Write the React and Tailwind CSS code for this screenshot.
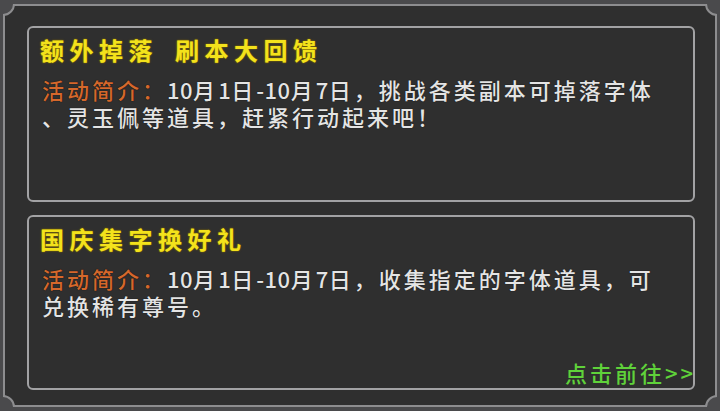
const cards = [
  {
    title: ['额外掉落', '刷本大回馈'],
    lines: ['10月1日-10月7日，挑战各类副本可掉落字体', '、灵玉佩等道具，赶紧行动起来吧！'],
  },
  {
    title: ['国庆集字换好礼'],
    lines: ['10月1日-10月7日，收集指定的字体道具，可', '兑换稀有尊号。'],
    link: true,
  },
];

function Txt({ text }) {
  const parts = text.split(/([0-9\-]+)/);
  return parts.map((p, i) =>
    /^[0-9\-]+$/.test(p) ? (
      <span key={i} className="tracking-[0.5px]">{p}</span>
    ) : (
      p
    )
  );
}

function Corner({ pos }) {
  return (
    <div
      className={`absolute w-[24px] h-[24px] rounded-full bg-[#4a4a4c] border-2 border-[#8d8d8f] ${pos}`}
    />
  );
}

function Card({ card }) {
  return (
    <div className="flex-1 flex flex-col rounded-[6px] border-2 border-[#a2a2a4] bg-[#2f2f2f] pl-[11px] pt-[7px]">
      <div className="h-[30px] leading-[30px] text-[24px] font-bold tracking-[5.5px] whitespace-pre text-[#f3e21c] [text-shadow:0_0_2px_#8a7000,0_0_1px_#8a7000]">
        {card.title[0]}
        {card.title[1] && (
          <>
            <span className="tracking-[3px]">{'  '}</span>
            {card.title[1]}
          </>
        )}
      </div>
      <div className="mt-[11px] ml-[2px] text-[22px] leading-[27px] font-medium tracking-[3px] text-[#e4e4e4] [text-shadow:0_0_1px_#000]">
        <span className="text-[#d5682c]">活动简介：</span>
        <Txt text={card.lines[0]} />
        <br />
        <Txt text={card.lines[1]} />
      </div>
      {card.link && (
        <div className="mt-auto mb-[4px] mr-[-3px] self-end text-[22px] leading-[24px] font-medium tracking-[3px] text-[#5fd23a]">
          点击前往&gt;&gt;
        </div>
      )}
    </div>
  );
}

export default function App() {
  return (
    <div
      className="w-[720px] h-[411px] bg-[#4a4a4c] pt-[4px] px-[3px] pb-[4px]"
      style={{ fontFamily: '"Noto Sans CJK SC", "Noto Sans", sans-serif' }}
    >
      <div className="relative h-full overflow-hidden bg-[#2f2f2f] shadow-[inset_0_0_0_2px_#8d8d8f] flex flex-col gap-[13px] pt-[22px] pl-[24px] pr-[22px] pb-[17px]">
        <Corner pos="-left-[12px] -top-[12px]" />
        <Corner pos="-right-[12px] -top-[12px]" />
        <Corner pos="-left-[12px] -bottom-[12px]" />
        <Corner pos="-right-[12px] -bottom-[12px]" />
        {cards.map((c, i) => (
          <Card key={i} card={c} />
        ))}
      </div>
    </div>
  );
}
